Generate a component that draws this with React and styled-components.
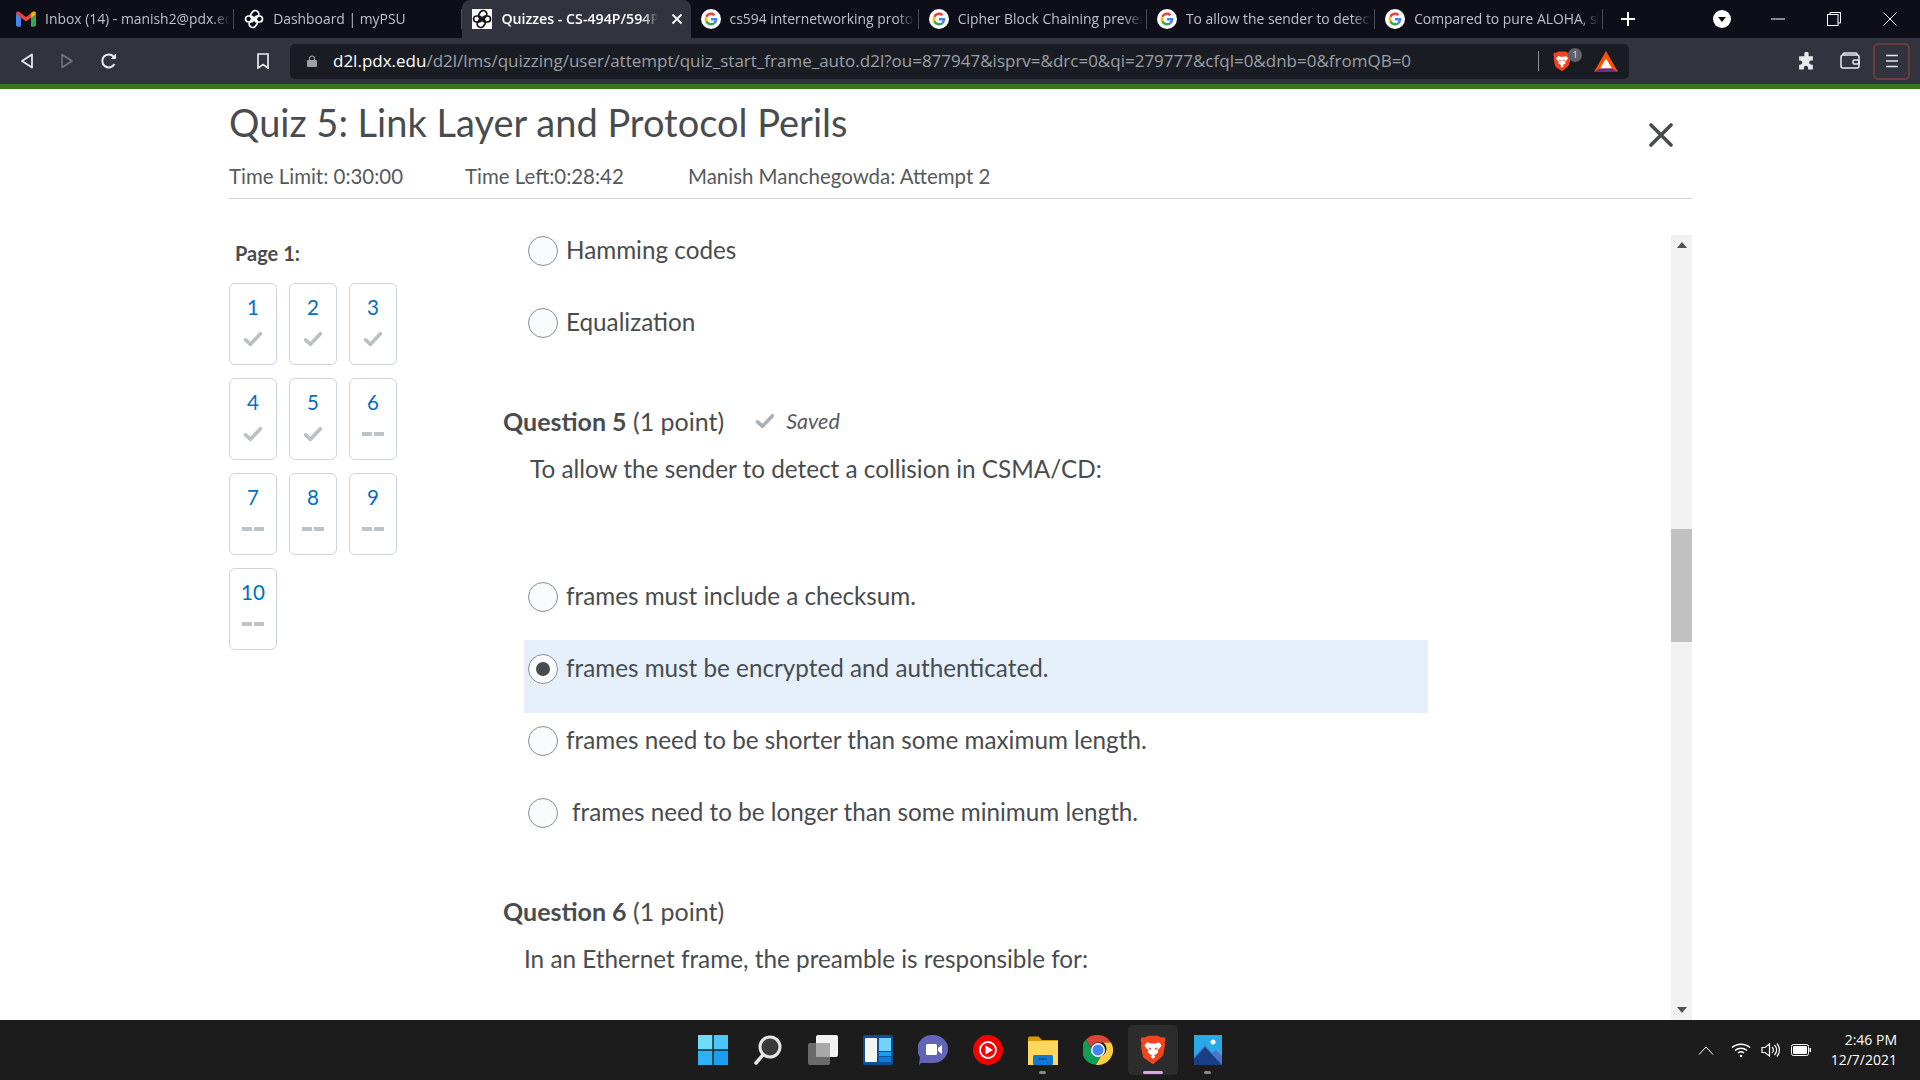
import React from "react";
import styled, { createGlobalStyle } from "styled-components";

const Global = createGlobalStyle`
  html, body { margin: 0; padding: 0; background: #fff; }
  * { box-sizing: border-box; }
`;

const UI_FONT = '"Open Sans", "Noto Sans", sans-serif';
const PAGE_FONT = 'Lato, "Open Sans", sans-serif';

const GmailIcon = () => (
  <svg width="20" height="16" viewBox="0 0 20 16">
    <path d="M1.400 15.500V3.800L0 2.400C0 .8 1.700-.2 3 .8L10 6l7-5.200c1.300-1 3 0 3 1.600l-1.400 1.400v11.700h-3.500V6.800L10 10.600 4.900 6.800v8.700z" fill="#ea4335" />
    <path d="M0 2.400v11.700c0 .8.6 1.400 1.400 1.400h3.500V6.800z" fill="#4285f4" />
    <path d="M20 2.400v11.700c0 .8-.6 1.400-1.400 1.400h-3.500V6.800z" fill="#34a853" />
    <path d="M15.100 1.900 20 2.400c0-1.600-1.700-2.600-3-1.600l-1.900 1.100v4.900L20 3z" fill="#fbbc04" />
  </svg>
);

const KnotIcon = ({ color }) => (
  <svg width="20" height="20" viewBox="0 0 20 20" fill="none" stroke={color} strokeWidth="1.700">
    <rect x="7" y="1" width="7" height="9" rx="3.400" transform="rotate(35 10 6)" />
    <rect x="6" y="10" width="7" height="9" rx="3.400" transform="rotate(35 10 14)" />
    <rect x="1.500" y="7" width="8" height="6" rx="3" />
    <rect x="10.500" y="7" width="8" height="6" rx="3" />
  </svg>
);

const GoogleIcon = () => (
  <svg width="20" height="20" viewBox="0 0 20 20">
    <circle cx="10" cy="10" r="10" fill="#fff" />
    <path d="M16.200 10.200c0-.5 0-.9-.1-1.300H10v2.500h3.500c-.2.8-.6 1.500-1.300 2l2 1.600c1.200-1.100 2-2.800 2-4.800z" fill="#4285f4" />
    <path d="M10 16.500c1.700 0 3.200-.6 4.200-1.500l-2-1.600c-.6.4-1.300.6-2.200.6-1.700 0-3.100-1.100-3.600-2.700l-2.100 1.600c1.100 2.100 3.200 3.600 5.700 3.600z" fill="#34a853" />
    <path d="M6.400 11.800c-.3-.8-.3-1.800 0-2.600L4.300 7.600c-.9 1.700-.9 3.800 0 5.800z" fill="#fbbc04" />
    <path d="M10 6c.9 0 1.800.3 2.500 1l1.800-1.800c-1.200-1.100-2.600-1.700-4.300-1.700-2.500 0-4.600 1.500-5.700 3.600l2.100 1.600C6.900 7.100 8.300 6 10 6z" fill="#ea4335" />
  </svg>
);

const BraveIcon = ({ size = 20 }) => (
  <svg width={size} height={size * 1.15} viewBox="0 0 20 23">
    <path d="M3.500 2 6.500.5h7L16.500 2l2.500-.3.6 2-.6 2.300.4 1.500-1.400 7.200c-.3 1.300-1 2.100-2 2.800L10 22.500 4.100 18.500c-1-.7-1.700-1.500-2-2.800L.7 8.500l.4-1.500L.5 3.700l.6-2z" fill="#f1431c" />
    <path d="M6 5.500 8 6.500h4l2-1 2 1.500.5 1.500-3 3.500.5 1.500-2 1.500L10 16.500 8 15l-2-1.500.5-1.500-3-3.500L4 7z" fill="#fff" />
    <path d="M8 16.800 10 15.500l2 1.300-2 1.500z" fill="#fff" />
    <path d="M6.500 9.500 9 10.500 7.500 11.500zM13.500 9.500 11 10.500 12.500 11.500z" fill="#f1431c" />
  </svg>
);

const BatIcon = () => (
  <svg width="24" height="21" viewBox="0 0 24 21">
    <path d="M12 0 24 21H0z" fill="#ff5000" />
    <path d="M12 7.500 18 17.500H6z" fill="#fff" />
    <path d="M0 21l6-3.500h12L24 21z" fill="#662d91" />
  </svg>
);

const Check = ({ color = "#b9c0c6", width = 20 }) => (
  <svg width={width} height={width * 0.8} viewBox="0 0 20 16" fill="none">
    <path d="M2.600 8.800 7.500 13.300 17.400 2.700" stroke={color} strokeWidth="3.600" strokeLinecap="round" strokeLinejoin="round" />
  </svg>
);

const tabs = [
  { title: "Inbox (14) - manish2@pdx.edu", icon: <GmailIcon /> },
  { title: "Dashboard | myPSU", icon: <KnotIcon color="#fff" /> },
  { title: "Quizzes - CS-494P/594P", icon: <KnotIcon color="#111" />, active: true },
  { title: "cs594 internetworking protocols", icon: <GoogleIcon /> },
  { title: "Cipher Block Chaining prevents", icon: <GoogleIcon /> },
  { title: "To allow the sender to detect a", icon: <GoogleIcon /> },
  { title: "Compared to pure ALOHA, slotted", icon: <GoogleIcon /> },
];

const questions = [
  { n: 1, done: true }, { n: 2, done: true }, { n: 3, done: true },
  { n: 4, done: true }, { n: 5, done: true }, { n: 6 },
  { n: 7 }, { n: 8 }, { n: 9 }, { n: 10 },
];

export default function App() {
  return (
    <Page>
      <Global />
      <TabStrip>
        {tabs.map(t => (
          <Tab key={t.title} $active={t.active}>
            <Favicon $light={t.active}>{t.icon}</Favicon>
            <TabTitle $active={t.active}>{t.title}</TabTitle>
            {t.active && (
              <TabClose viewBox="0 0 12 12">
                <path d="M1.500 1.500 10.500 10.500M10.500 1.500 1.500 10.500" stroke="#fff" strokeWidth="1.800" />
              </TabClose>
            )}
          </Tab>
        ))}
        <NewTab viewBox="0 0 16 16">
          <path d="M8 1v14M1 8h14" stroke="#fff" strokeWidth="2" />
        </NewTab>
        <TabSpacer />
        <WinCircle viewBox="0 0 18 18">
          <circle cx="9" cy="9" r="9" fill="#fff" />
          <path d="M5 7h8l-4 5z" fill="#0d0e17" />
        </WinCircle>
        <WinButton>
          <svg width="14" height="14" viewBox="0 0 14 14"><path d="M0 7h14" stroke="#fff" /></svg>
        </WinButton>
        <WinButton>
          <svg width="14" height="14" viewBox="0 0 14 14" fill="none" stroke="#fff"><rect x=".5" y="2.500" width="10.500" height="11" /><path d="M3 2.500V.5h10.500V11H11" /></svg>
        </WinButton>
        <WinButton>
          <svg width="14" height="14" viewBox="0 0 14 14"><path d="M.5.5l13 13M13.500.5l-13 13" stroke="#fff" /></svg>
        </WinButton>
      </TabStrip>

      <Toolbar>
        <NavIcons>
          <svg width="14" height="16" viewBox="0 0 14 16" fill="none" stroke="#e8eaed" strokeWidth="1.800" strokeLinejoin="round"><path d="M12 1.500v13L2 8z" /></svg>
          <svg width="14" height="16" viewBox="0 0 14 16" fill="none" stroke="#70747c" strokeWidth="1.500" strokeLinejoin="round"><path d="M2 1.500v13L12 8z" /></svg>
          <svg width="18" height="18" viewBox="0 0 18 18" fill="none" stroke="#e8eaed" strokeWidth="2"><path d="M14.500 12a6.500 6.500 0 1 1-.5-7" /><path d="M15.500 2v4.500H11" fill="#e8eaed" strokeWidth="1" /></svg>
        </NavIcons>
        <Bookmark viewBox="0 0 14 16" fill="none" stroke="#e8eaed" strokeWidth="1.700">
          <path d="M2 1h10v14l-5-3.500L2 15z" />
        </Bookmark>
        <AddressBar>
          <LockIcon viewBox="0 0 10 12">
            <path d="M2.500 5V3.500a2.500 2.500 0 0 1 5 0V5" fill="none" stroke="#9aa0a6" strokeWidth="1.200" />
            <rect y="5" width="10" height="7" rx="1" fill="#9aa0a6" />
          </LockIcon>
          <Url>
            <strong>d2l.pdx.edu</strong>/d2l/lms/quizzing/user/attempt/quiz_start_frame_auto.d2l?ou=877947&isprv=&drc=0&qi=279777&cfql=0&dnb=0&fromQB=0
          </Url>
          <AddressDivider />
          <ShieldSlot>
            <BraveIcon size={18} />
            <ShieldBadge>1</ShieldBadge>
          </ShieldSlot>
          <BatIcon />
        </AddressBar>
        <ToolIcons>
          <Puzzle viewBox="0 0 18 18"><path d="M7 1.500a2 2 0 0 1 4 0V4h4v4h-1.500a2 2 0 0 0 0 4H15v4.500h-4.500V15a2 2 0 0 0-4 0v1.500H2V12h1a2 2 0 0 0 0-4H2V4h5z" fill="#e8eaed" /></Puzzle>
          <Wallet viewBox="0 0 20 18" fill="none" stroke="#e8eaed" strokeWidth="1.500"><rect x="1" y="3" width="18" height="13" rx="2" /><path d="M3 3V2.500C3 1.500 4 1 5 1h10c1 0 2 .5 2 1.500V3" /><rect x="13" y="8" width="6" height="4" rx="1.500" /></Wallet>
          <MenuBox>
            <svg width="14" height="14" viewBox="0 0 14 14"><path d="M1 1.500h12M1 7h12M1 12.500h12" stroke="#e8eaed" strokeWidth="1.500" /></svg>
          </MenuBox>
        </ToolIcons>
      </Toolbar>
      <GreenLine />

      <Main>
        <Header>
          <TitleRow>
            <Title>Quiz 5: Link Layer and Protocol Perils</Title>
            <CloseIcon viewBox="0 0 24 24">
              <path d="M2 2 22 22M22 2 2 22" stroke="#494c4e" strokeWidth="3.600" strokeLinecap="round" />
            </CloseIcon>
          </TitleRow>
          <Meta>
            <MetaItem $width={236}>Time Limit: 0:30:00</MetaItem>
            <MetaItem $width={223}>Time Left:0:28:42</MetaItem>
            <MetaItem>Manish Manchegowda: Attempt 2</MetaItem>
          </Meta>
        </Header>

        <Body>
          <Sidebar>
            <PageLabel>Page 1:</PageLabel>
            <TileGrid>
              {questions.map(q => (
                <Tile key={q.n}>
                  <TileNumber>{q.n}</TileNumber>
                  <TileMark>
                    {q.done ? <Check /> : <Dashes><i /><i /></Dashes>}
                  </TileMark>
                </Tile>
              ))}
            </TileGrid>
          </Sidebar>

          <Content>
            <Options>
              <Option>
                <Radio />
                <OptionText>Hamming codes</OptionText>
              </Option>
              <Option>
                <Radio />
                <OptionText>Equalization</OptionText>
              </Option>
            </Options>

            <QuestionHead $top={39}>
              <QuestionTitle>
                <b>Question 5</b> (1 point)
              </QuestionTitle>
              <Saved>
                <Check color="#a9b0b6" />
                <em>Saved</em>
              </Saved>
            </QuestionHead>
            <Prompt $indent={27}>To allow the sender to detect a collision in CSMA/CD:</Prompt>

            <Options $top={84}>
              <Option>
                <Radio />
                <OptionText>frames must include a checksum.</OptionText>
              </Option>
              <Option $selected>
                <Radio $checked />
                <OptionText>frames must be encrypted and authenticated.</OptionText>
              </Option>
              <Option>
                <Radio />
                <OptionText>frames need to be shorter than some maximum length.</OptionText>
              </Option>
              <Option>
                <Radio />
                <OptionText $shift={6}>frames need to be longer than some minimum length.</OptionText>
              </Option>
            </Options>

            <QuestionHead $top={39}>
              <QuestionTitle>
                <b>Question 6</b> (1 point)
              </QuestionTitle>
            </QuestionHead>
            <Prompt $indent={21}>In an Ethernet frame, the preamble is responsible for:</Prompt>
          </Content>

          <Scrollbar>
            <ScrollArrow viewBox="0 0 10 6"><path d="M5 0l5 6H0z" fill="#505050" /></ScrollArrow>
            <ScrollThumb />
            <ScrollArrow viewBox="0 0 10 6"><path d="M5 6 0 0h10z" fill="#505050" /></ScrollArrow>
          </Scrollbar>
        </Body>
      </Main>

      <Taskbar>
        <TaskIcons>
          <TaskIcon>
            <svg width="30" height="30" viewBox="0 0 30 30">
              <rect width="14.300" height="14.300" fill="#6fdcfb" />
              <rect x="15.700" width="14.300" height="14.300" fill="#4cc6f7" />
              <rect y="15.700" width="14.300" height="14.300" fill="#2fb2f3" />
              <rect x="15.700" y="15.700" width="14.300" height="14.300" fill="#1a9fee" />
            </svg>
          </TaskIcon>
          <TaskIcon>
            <svg width="28" height="30" viewBox="0 0 28 30" fill="none">
              <circle cx="16" cy="12" r="10" fill="#3a3a3a" stroke="#e6e6e6" strokeWidth="3" />
              <path d="M9 20 2 28" stroke="#e6e6e6" strokeWidth="3.500" strokeLinecap="round" />
            </svg>
          </TaskIcon>
          <TaskIcon>
            <svg width="30" height="30" viewBox="0 0 30 30">
              <rect x="0" y="8" width="22" height="22" rx="2" fill="#6a6a6a" />
              <rect x="8" y="0" width="22" height="22" rx="2" fill="#f2f2f2" />
              <rect x="8" y="8" width="14" height="14" fill="#a8a8a8" />
            </svg>
          </TaskIcon>
          <TaskIcon>
            <svg width="30" height="30" viewBox="0 0 30 30">
              <rect width="30" height="30" rx="2" fill="#0f4f96" />
              <rect x="2" y="3" width="12" height="24" rx="1" fill="#f4f4f4" />
              <rect x="16" y="3" width="12" height="13" fill="#6fd3fb" />
              <rect x="16" y="17" width="12" height="4" fill="#1b9cf0" />
              <rect x="16" y="22" width="12" height="5" fill="#0b7fe0" />
            </svg>
          </TaskIcon>
          <TaskIcon>
            <svg width="30" height="30" viewBox="0 0 30 30">
              <path d="M15 0a15 14 0 0 1 0 28H3l-2 2 1-8A15 14 0 0 1 15 0z" fill="#6264b8" />
              <rect x="8" y="9" width="11" height="11" rx="1.500" fill="#fff" />
              <path d="M20 13l4-3v9l-4-3z" fill="#fff" />
            </svg>
          </TaskIcon>
          <TaskIcon>
            <svg width="30" height="30" viewBox="0 0 30 30">
              <circle cx="15" cy="15" r="15" fill="#f50000" />
              <circle cx="15" cy="15" r="8" fill="none" stroke="#fff" strokeWidth="1.800" />
              <path d="M12.500 10.500 20 15l-7.500 4.500z" fill="#fff" />
            </svg>
          </TaskIcon>
          <TaskIcon $dot="#8a8a8a">
            <svg width="30" height="30" viewBox="0 0 30 30">
              <path d="M0 3a1.500 1.500 0 0 1 1.500-1.500h9L14 5h16v4H0z" fill="#d99b00" />
              <rect y="6" width="30" height="24" fill="#ffd75e" />
              <rect x="5" y="20" width="20" height="10" rx="1.500" fill="#0f78d4" />
              <path d="M11 24h8" stroke="#0a4f8f" strokeWidth="1.500" />
            </svg>
          </TaskIcon>
          <TaskIcon>
            <svg width="30" height="30" viewBox="0 0 30 30">
              <path d="M15 0a15 15 0 0 1 13 7.500H15a7.500 7.500 0 0 0-7 5L3 4.500A15 15 0 0 1 15 0z" fill="#db4437" />
              <path d="M3 4.500l5.500 9.500a7.500 7.500 0 0 0 9 7.500L13 29.800A15 15 0 0 1 3 4.500z" fill="#0f9d58" />
              <path d="M28 7.500A15 15 0 0 1 13 29.800l5-8.800a7.500 7.500 0 0 0 2-13.500z" fill="#ffcd40" />
              <circle cx="15" cy="15" r="7" fill="#fff" />
              <circle cx="15" cy="15" r="5.500" fill="#4285f4" />
            </svg>
          </TaskIcon>
          <TaskIcon $active $dot="#d8a7e2" $dotWide>
            <BraveIcon size={26} />
          </TaskIcon>
          <TaskIcon $dot="#8a8a8a">
            <svg width="30" height="30" viewBox="0 0 30 30">
              <rect width="28" height="30" x="1" fill="#2aa9e8" />
              <circle cx="20" cy="7" r="2.500" fill="#fff" />
              <path d="M1 22 12 10l7 8 4-3 6 6v9H1z" fill="#4a74c9" />
              <path d="M1 24 12 12l17 18H1z" fill="#183f86" />
            </svg>
          </TaskIcon>
        </TaskIcons>
        <Tray>
          <TrayChevron viewBox="0 0 16 9" fill="none" stroke="#fff"><path d="M1 8.500 8 1l7 7.500" /></TrayChevron>
          <svg width="20" height="16" viewBox="0 0 20 16" fill="none" stroke="#fff" strokeWidth="1.500">
            <path d="M1 5.500c5-4.500 13-4.500 18 0M4 8.500c3.500-3 8.500-3 12 0M7 11c1.800-1.500 4.200-1.500 6 0" />
            <circle cx="10" cy="14" r="1.200" fill="#fff" stroke="none" />
          </svg>
          <svg width="20" height="16" viewBox="0 0 20 16" fill="none" stroke="#fff" strokeWidth="1.200">
            <path d="M1 5.500h3L8.500 2v12L4 10.500H1z" />
            <path d="M11 5a4 4 0 0 1 0 6M13.500 3a7 7 0 0 1 0 10M16 1.500a10 10 0 0 1 0 13" />
          </svg>
          <svg width="20" height="12" viewBox="0 0 20 12" fill="none">
            <rect x=".5" y=".5" width="17" height="11" rx="2" stroke="#fff" />
            <rect x="2" y="2" width="14" height="8" rx="1" fill="#fff" />
            <rect x="18.500" y="4" width="1.500" height="4" fill="#fff" />
          </svg>
          <Clock>
            <span>2:46 PM</span>
            <span>12/7/2021</span>
          </Clock>
        </Tray>
      </Taskbar>
    </Page>
  );
}

const Page = styled.div`
  width: 1920px;
  height: 1080px;
  display: flex;
  flex-direction: column;
  overflow: hidden;
  background: #fff;
`;

const TabStrip = styled.div`
  height: 38px;
  display: flex;
  align-items: stretch;
  padding: 0 2px 0 6px;
  background: #0d0e17;
`;

const Tab = styled.div`
  position: relative;
  width: 228.2px;
  flex: none;
  display: flex;
  align-items: center;
  gap: 9px;
  padding: 0 ${p => (p.$active ? "8px" : "4px")} 0 10px;
  border-radius: ${p => (p.$active ? "8px 8px 0 0" : "0")};
  background: ${p => (p.$active ? "#31343f" : "transparent")};

  &::after {
    content: "";
    position: absolute;
    right: 0;
    top: 9px;
    bottom: 9px;
    width: 1px;
    background: ${p => (p.$active ? "transparent" : "#4a4c55")};
  }
`;

const Favicon = styled.span`
  width: 20px;
  height: 20px;
  flex: none;
  display: flex;
  align-items: center;
  justify-content: center;
  background: ${p => (p.$light ? "#fff" : "transparent")};
`;

const TabTitle = styled.span`
  flex: 1;
  min-width: 0;
  margin-top: -2px;
  white-space: nowrap;
  overflow: hidden;
  font: ${p => (p.$active ? "600 14.2px" : "400 13.9px")} ${UI_FONT};
  color: ${p => (p.$active ? "#fff" : "#bdc1c6")};
  -webkit-mask-image: linear-gradient(to right, #000 90%, transparent 100%);
  mask-image: linear-gradient(to right, #000 90%, transparent 100%);
`;

const TabClose = styled.svg`
  width: 12px;
  height: 12px;
  flex: none;
  margin-left: 4px;
`;

const NewTab = styled.svg`
  width: 16px;
  height: 16px;
  margin: auto 0 auto 17px;
`;

const TabSpacer = styled.div`
  flex: 1;
`;

const WinCircle = styled.svg`
  width: 18px;
  height: 18px;
  margin: auto 19px auto 0;
`;

const WinButton = styled.div`
  width: 56px;
  display: flex;
  align-items: center;
  justify-content: center;
`;

const Toolbar = styled.div`
  height: 46px;
  display: flex;
  align-items: center;
  padding: 0 10px 0 20px;
  background: #31343f;
`;

const NavIcons = styled.div`
  display: flex;
  align-items: center;
  gap: 26px;
  width: 237px;
`;

const Bookmark = styled.svg`
  width: 14px;
  height: 16px;
  margin: 0 20px 0 -1px;
`;

const AddressBar = styled.div`
  width: 1339px;
  height: 35px;
  display: flex;
  align-items: center;
  padding: 0 11px 0 17px;
  border-radius: 5px;
  background: #1a1c24;
`;

const LockIcon = styled.svg`
  width: 10px;
  height: 12px;
  flex: none;
`;

const Url = styled.div`
  flex: 1;
  margin: -2px 0 0 16px;
  white-space: nowrap;
  overflow: hidden;
  font: 400 17px ${UI_FONT};
  color: #9aa0a6;

  strong {
    font-weight: 400;
    color: #fff;
  }
`;

const AddressDivider = styled.div`
  width: 1px;
  height: 20px;
  margin-right: 14px;
  background: #8a8d93;
`;

const ShieldSlot = styled.div`
  position: relative;
  width: 41px;
  display: flex;
`;

const ShieldBadge = styled.span`
  position: absolute;
  left: 15px;
  top: -3px;
  width: 14px;
  height: 14px;
  border-radius: 50%;
  background: #5f6068;
  color: #e8eaed;
  font: 400 9px/14px ${UI_FONT};
  text-align: center;
`;

const ToolIcons = styled.div`
  display: flex;
  align-items: center;
  margin-left: auto;
`;

const Puzzle = styled.svg`
  width: 19px;
  height: 19px;
`;

const Wallet = styled.svg`
  width: 20px;
  height: 18px;
  margin: 0 13px 0 24px;
`;

const TrayChevron = styled.svg`
  width: 16px;
  height: 9px;
  margin-right: 7px;
`;

const MenuBox = styled.div`
  width: 37px;
  height: 37px;
  display: flex;
  align-items: center;
  justify-content: center;
  border: 2px solid #6b3d3a;
  border-radius: 5px;
`;

const GreenLine = styled.div`
  height: 5px;
  background: #38761d;
`;

const Main = styled.main`
  flex: 1;
  min-height: 0;
  display: flex;
  flex-direction: column;
  padding: 0 228px 0 229px;
  font-family: ${PAGE_FONT};
  color: #494c4e;
`;

const Header = styled.header`
  height: 110px;
  flex: none;
  border-bottom: 1px solid #cdd5dc;
`;

const TitleRow = styled.div`
  display: flex;
  align-items: center;
  justify-content: space-between;
  height: 66px;
  padding-right: 19px;
`;

const Title = styled.h1`
  margin: 0;
  font-size: 38px;
  font-weight: 400;
  color: #494c4e;
`;

const CloseIcon = styled.svg`
  width: 24px;
  height: 24px;
  margin-top: 26px;
`;

const Meta = styled.div`
  display: flex;
  align-items: center;
  height: 38px;
  margin-top: 2px;
  font-size: 20.45px;
  color: #565a5c;
`;

const MetaItem = styled.span`
  flex: none;
  flex-basis: ${p => (p.$width ? `${p.$width}px` : "auto")};
`;

const Body = styled.div`
  flex: 1;
  min-height: 0;
  display: flex;
  margin-top: 36px;
`;

const Sidebar = styled.aside`
  width: 274px;
  flex: none;
`;

const PageLabel = styled.div`
  margin: 7px 0 0 6px;
  font-size: 20px;
  line-height: 22px;
  font-weight: 700;
`;

const TileGrid = styled.div`
  display: grid;
  grid-template-columns: repeat(3, 48px);
  grid-auto-rows: 82px;
  gap: 13px 12px;
  margin-top: 19px;
`;

const Tile = styled.div`
  display: flex;
  flex-direction: column;
  align-items: center;
  border: 1px solid #cdd5dc;
  border-radius: 6px;
`;

const TileNumber = styled.span`
  margin-top: 11px;
  font-size: 20.5px;
  line-height: 24px;
  color: #006fbf;
`;

const TileMark = styled.div`
  height: 16px;
  margin-top: 12px;
  display: flex;
  align-items: center;
`;

const Dashes = styled.div`
  display: flex;
  gap: 2px;

  i {
    width: 10px;
    height: 3.5px;
    background: #bcc3c9;
  }
`;

const Content = styled.section`
  flex: 1;
  min-width: 0;
  overflow: hidden;
`;

const Options = styled.div`
  margin: ${p => (p.$top ? `${p.$top}px` : "-13px")} 0 0 21px;
  width: 904px;
`;

const Option = styled.label`
  height: 73px;
  margin-bottom: -1px;
  display: flex;
  align-items: flex-start;
  padding: 14px 0 0 4px;
  background: ${p => (p.$selected ? "#e6f0fa" : "transparent")};
`;

const Radio = styled.span`
  width: 30px;
  height: 30px;
  flex: none;
  display: flex;
  align-items: center;
  justify-content: center;
  border: 1px solid #8a8f93;
  border-radius: 50%;
  background: #f9fbff;

  &::after {
    content: "";
    display: ${p => (p.$checked ? "block" : "none")};
    width: 14px;
    height: 14px;
    border-radius: 50%;
    background: #494c4e;
  }
`;

const OptionText = styled.span`
  margin-left: ${p => 8 + (p.$shift || 0)}px;
  font-size: 24.25px;
  line-height: 28px;
  color: #494c4e;
`;

const QuestionHead = styled.div`
  display: flex;
  align-items: center;
  gap: 31px;
  height: 32px;
  margin-top: ${p => p.$top}px;
`;

const QuestionTitle = styled.div`
  font-size: 25px;
  color: #494c4e;

  b {
    font-weight: 700;
  }
`;

const Saved = styled.div`
  display: flex;
  align-items: center;
  gap: 11px;
  font-size: 21.5px;
  color: #565a5c;
`;

const Prompt = styled.p`
  margin: 17px 0 0 ${p => p.$indent}px;
  font-size: 24.3px;
  line-height: 30px;
  color: #494c4e;
`;

const Scrollbar = styled.div`
  width: 21px;
  flex: none;
  display: flex;
  flex-direction: column;
  align-items: center;
  background: #f1f1f1;
`;

const ScrollArrow = styled.svg`
  width: 10px;
  height: 6px;
  flex: none;
  margin: 7px 0;
`;

const ScrollThumb = styled.div`
  width: 100%;
  height: 113px;
  margin-top: 274px;
  margin-bottom: auto;
  background: #c1c1c1;
`;

const Taskbar = styled.footer`
  position: relative;
  height: 60px;
  flex: none;
  display: flex;
  align-items: center;
  justify-content: center;
  background: #1c1c1c;
`;

const TaskIcons = styled.div`
  display: flex;
  gap: 5px;
`;

const TaskIcon = styled.div`
  position: relative;
  width: 50px;
  height: 50px;
  display: flex;
  align-items: center;
  justify-content: center;
  border-radius: 5px;
  background: ${p => (p.$active ? "#2c2c2c" : "transparent")};

  &::after {
    content: "";
    display: ${p => (p.$dot ? "block" : "none")};
    position: absolute;
    bottom: 1px;
    left: 50%;
    width: ${p => (p.$dotWide ? "20px" : "7px")};
    height: 3px;
    margin-left: ${p => (p.$dotWide ? "-10px" : "-3.5px")};
    border-radius: 2px;
    background: ${p => p.$dot};
  }
`;

const Tray = styled.div`
  position: absolute;
  right: 23px;
  top: 0;
  bottom: 0;
  display: flex;
  align-items: center;
  gap: 10px;
`;

const Clock = styled.div`
  display: flex;
  flex-direction: column;
  align-items: flex-end;
  gap: 1px;
  margin: -2px 0 0 10px;
  font: 400 14px/19px ${UI_FONT};
  color: #fff;
`;
